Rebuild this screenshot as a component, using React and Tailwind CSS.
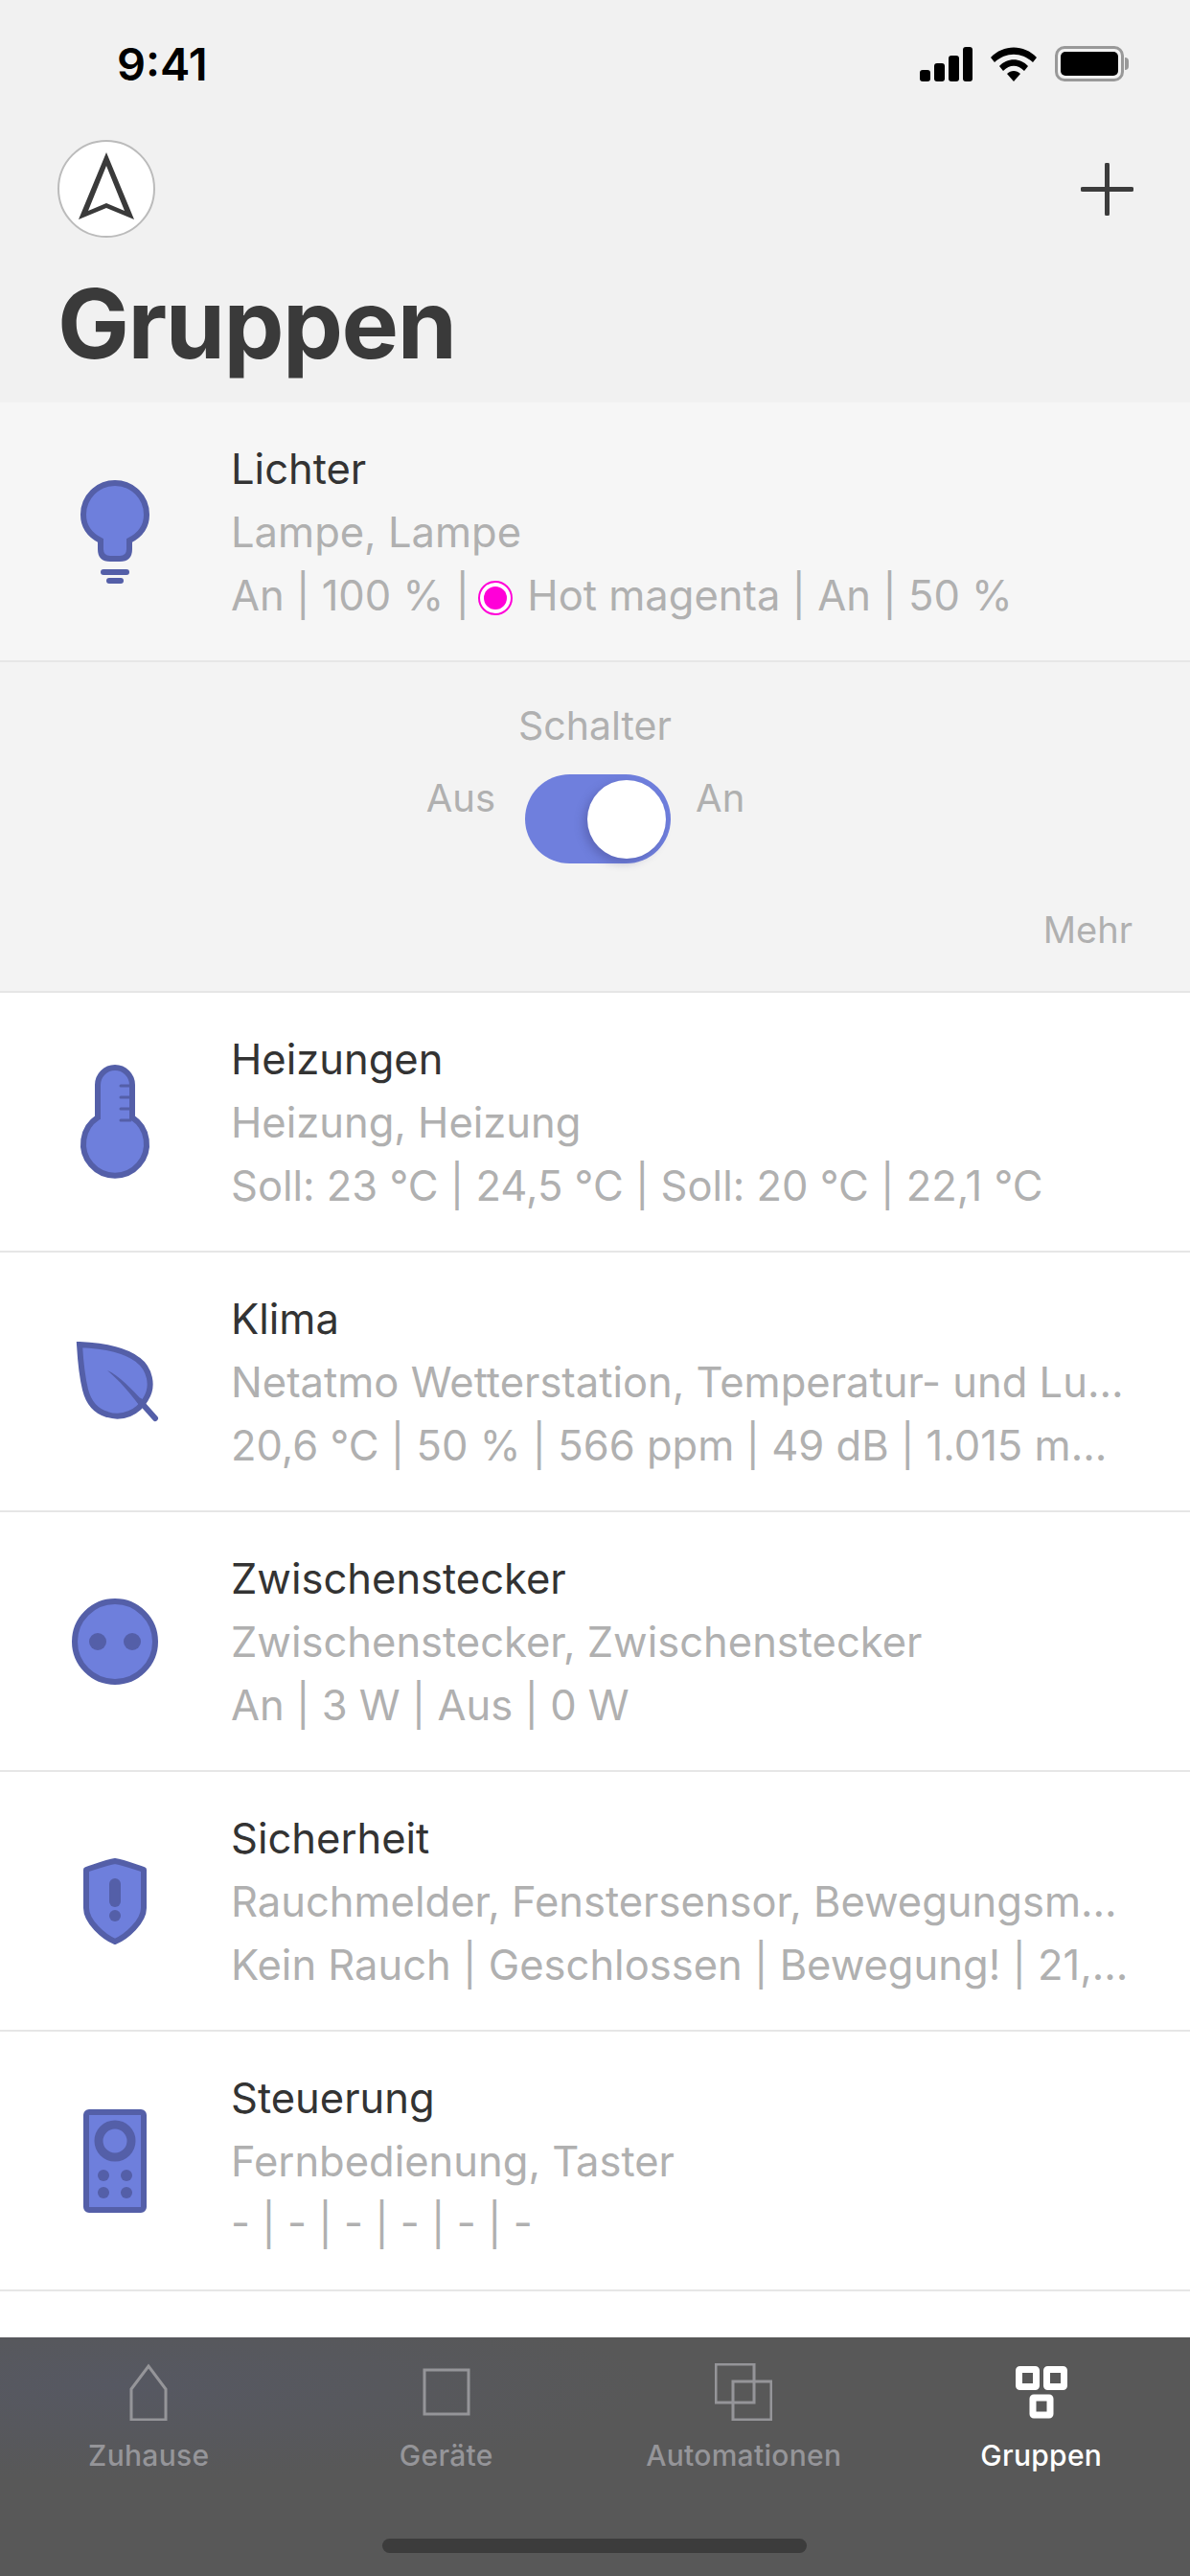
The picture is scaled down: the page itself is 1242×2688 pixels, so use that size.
import React from 'react';

const FILL = '#6e7fdc';
const EDGE = '#545fa8';

// list icons are all drawn in a 120 wide box, stroke 6 like the reference
const LampIcon = () => (
  <svg width="120" height="108" viewBox="0 0 120 108">
    <path d="M45 72 V63 C31 56 27 46 27 36 A33 33 0 0 1 93 36 C93 46 89 56 75 63 V72 Q75 82 65 82 H55 Q45 82 45 72 Z" fill={FILL} stroke={EDGE} strokeWidth="6" />
    <rect x="45" y="93" width="30" height="6" rx="3" fill={EDGE} />
    <rect x="51" y="102" width="18" height="6" rx="3" fill={EDGE} />
  </svg>
);

const ThermoIcon = () => (
  <svg width="120" height="120" viewBox="0 0 120 120">
    <path d="M42 55 V21 A18 18 0 0 1 78 21 V55 A33 33 0 1 1 42 55 Z" fill={FILL} stroke={EDGE} strokeWidth="6" />
    <path d="M66 22 H76 M66 34 H76 M66 46 H76 M66 58 H76" stroke={EDGE} strokeWidth="3" strokeLinecap="round" />
  </svg>
);

const LeafIcon = () => (
  <svg width="120" height="84" viewBox="0 0 120 84">
    <path d="M23 3 C45 4 70 8 84 19 C96 28 101 46 92 60 C84 74 68 81 52 76 C38 72 32 62 29 50 C26 38 24 20 23 3 Z" fill={FILL} stroke={EDGE} strokeWidth="6" />
    <path d="M52 30 C64 35 78 50 90 63 L85 66 C76 54 64 40 52 30 Z" fill={EDGE} />
    <path d="M86 62 L102 80" stroke={EDGE} strokeWidth="6" strokeLinecap="round" />
  </svg>
);

const SocketIcon = () => (
  <svg width="120" height="90" viewBox="0 0 120 90">
    <circle cx="60" cy="45" r="42" fill={FILL} stroke={EDGE} strokeWidth="6" />
    <circle cx="42" cy="45" r="9" fill={EDGE} />
    <circle cx="78" cy="45" r="9" fill={EDGE} />
  </svg>
);

const ShieldIcon = () => (
  <svg width="120" height="90" viewBox="0 0 120 90">
    <path d="M30 12 C42 8 52 4 60 3 C68 4 78 8 90 12 V52 C90 66 72 82 60 87 C48 82 30 66 30 52 Z" fill={FILL} stroke={EDGE} strokeWidth="6" strokeLinejoin="round" />
    <rect x="54" y="21" width="12" height="30" rx="6" fill={EDGE} />
    <circle cx="60" cy="60" r="6" fill={EDGE} />
  </svg>
);

const RemoteIcon = () => (
  <svg width="120" height="108" viewBox="0 0 120 108">
    <rect x="30" y="3" width="60" height="102" rx="3" fill={FILL} stroke={EDGE} strokeWidth="6" />
    <circle cx="60" cy="33" r="17" fill="none" stroke={EDGE} strokeWidth="9" />
    <circle cx="48" cy="69" r="6" fill={EDGE} />
    <circle cx="72" cy="69" r="6" fill={EDGE} />
    <circle cx="48" cy="87" r="6" fill={EDGE} />
    <circle cx="72" cy="87" r="6" fill={EDGE} />
  </svg>
);

const groups = [
  { name: 'Heizungen', devices: 'Heizung, Heizung', state: 'Soll: 23 °C | 24,5 °C | Soll: 20 °C | 22,1 °C', icon: <ThermoIcon /> },
  { name: 'Klima', devices: 'Netatmo Wetterstation, Temperatur- und Lu…', state: '20,6 °C | 50 % | 566 ppm | 49 dB | 1.015 m…', icon: <LeafIcon /> },
  { name: 'Zwischenstecker', devices: 'Zwischenstecker, Zwischenstecker', state: 'An | 3 W | Aus | 0 W', icon: <SocketIcon /> },
  { name: 'Sicherheit', devices: 'Rauchmelder, Fenstersensor, Bewegungsm…', state: 'Kein Rauch | Geschlossen | Bewegung! | 21,…', icon: <ShieldIcon /> },
  { name: 'Steuerung', devices: 'Fernbedienung, Taster', state: '- | - | - | - | - | -', icon: <RemoteIcon /> },
];

const GroupRow = ({ name, devices, state, icon, className = 'bg-white' }) => (
  <div className={`flex items-center h-[271px] pl-[60px] pr-[40px] border-b-2 border-[#e6e6e6] ${className}`}>
    <div className="w-[120px] shrink-0 flex justify-center">{icon}</div>
    <div className="ml-[61px] min-w-0 flex-1 text-[43.5px] leading-[66px] text-[#b0b0b0] whitespace-nowrap">
      <div className="text-[#333333]">{name}</div>
      <div>{devices}</div>
      <div>{state}</div>
    </div>
  </div>
);

const tabs = [
  {
    label: 'Zuhause',
    icon: <path d="M2 26 L20 2 L38 26 V58 H2 Z" transform="translate(10 1)" />,
  },
  { label: 'Geräte', icon: <rect x="7" y="7" width="46" height="46" /> },
  {
    label: 'Automationen',
    icon: (
      <>
        <rect x="1" y="1" width="40" height="40" />
        <rect x="19" y="19" width="40" height="40" />
      </>
    ),
  },
];

export default function App() {
  return (
    <div className="h-[2688px] flex flex-col overflow-hidden bg-white font-['Inter',sans-serif]">
      <header className="bg-[#f1f1f1] h-[420px] shrink-0">
        {/* status bar */}
        <div className="flex items-center justify-between h-[134px] pl-[122px] pr-[64px] pb-[1px]">
          <span className="text-[47px] leading-none font-semibold text-black">9:41</span>
          <div className="flex items-center">
            <svg width="56" height="36" viewBox="0 0 56 36">
              <rect x="0" y="24" width="11" height="12" rx="3" />
              <rect x="15" y="17" width="11" height="19" rx="3" />
              <rect x="30" y="9" width="11" height="27" rx="3" />
              <rect x="45" y="0" width="10" height="36" rx="3" />
            </svg>
            <svg className="ml-[18px]" width="48" height="36" viewBox="0 0 48 36">
              <path d="M0 11 C13 -3 35 -3 48 11 L44 16 C32 5 16 5 4 16 Z" />
              <path d="M9 20 C17 11 31 11 39 20 L35 25 C28 18 20 18 13 25 Z" />
              <path d="M17 28 C21 24 27 24 31 28 L24 36 Z" />
            </svg>
            <div className="ml-[19px] flex items-center">
              <div className="w-[72px] h-[37px] rounded-[10px] border-[3px] border-[#999999] p-[3px]">
                <div className="h-full rounded-[5px] bg-black" />
              </div>
              <div className="w-[4px] h-[13px] rounded-r-full bg-[#999999] ml-[1px]" />
            </div>
          </div>
        </div>
        {/* nav row */}
        <div className="flex items-center justify-between pl-[60px] pr-[59px] mt-[12px]">
          <div className="w-[102px] h-[102px] rounded-full bg-white border-2 border-[#bbbbbb] flex items-center justify-center">
            <svg width="66" height="78" viewBox="0 0 66 78">
              <path fillRule="evenodd" fill="#3a3a3a" d="M33 1 L62 71 L33 59 L4 71 Z M33 15 L14 62 L33 54 L52 62 Z" />
            </svg>
          </div>
          <svg width="55" height="55" viewBox="0 0 55 55">
            <path d="M27.5 2 V53 M2 27.5 H53" stroke="#3c3c3c" strokeWidth="5" strokeLinecap="round" />
          </svg>
        </div>
        <h1 className="pl-[60px] mt-[35px] text-[100px] leading-[110px] font-bold tracking-[-1.5px] text-[#3a3a3a]">Gruppen</h1>
      </header>

      <main className="flex-1 min-h-0 overflow-hidden">
        <GroupRow
          name="Lichter"
          devices="Lampe, Lampe"
          icon={<LampIcon />}
          className="bg-[#f6f6f6]"
          state={
            <>
              An | 100 % |{' '}
              <span className="inline-flex align-[1px] items-center justify-center w-[36px] h-[36px] rounded-full bg-white border-2 border-[#ff00d8] ml-[-3px] mr-[3px]">
                <span className="w-[24px] h-[24px] rounded-full bg-[#ff00d8]" />
              </span>{' '}
              Hot magenta | An | 50 %
            </>
          }
        />
        {/* expanded controls of the light group */}
        <section className="h-[345px] bg-[#f3f3f3] border-b-2 border-[#e6e6e6] text-[41px] text-[#b0b0b0] flex flex-col">
          <div className="mt-[34px] h-[64px] leading-[64px] text-center">Schalter</div>
          <div className="mt-[19px] flex justify-center items-start pr-[20px]">
            <span className="leading-[50px] text-[40px]">Aus</span>
            <div className="ml-[31px] w-[152px] h-[93px] rounded-full bg-[#6f7fdd] flex items-center justify-end pr-[5px]">
              <div className="w-[82px] h-[82px] rounded-full bg-white shadow-[-4px_4px_10px_rgba(60,60,120,0.35)]" />
            </div>
            <span className="ml-[26px] leading-[50px] text-[40px]">An</span>
          </div>
          <div className="mt-[37px] pr-[60px] text-right leading-[64px] text-[38px]">Mehr</div>
        </section>
        {groups.map((g) => (
          <GroupRow key={g.name} {...g} />
        ))}
      </main>

      {/* tab bar */}
      <nav className="relative h-[249px] shrink-0 bg-[#585858] bg-[radial-gradient(ellipse_at_10%_20%,#565862_0%,#585858_35%)]">
        <div className="grid grid-cols-4 pt-[27px]">
          {tabs.map((t) => (
            <div key={t.label} className="flex flex-col items-center text-[#959599]">
              <svg width="60" height="60" viewBox="0 0 60 60" fill="none" stroke="currentColor" strokeWidth="3">
                {t.icon}
              </svg>
              <span className="mt-[18px] text-[30px] leading-[36px] tracking-[0.3px] font-medium">{t.label}</span>
            </div>
          ))}
          <div className="flex flex-col items-center text-white">
            <svg width="60" height="60" viewBox="0 0 60 60" fill="none" stroke="currentColor" strokeWidth="7">
              <rect x="6.5" y="6.5" width="18" height="18" rx="1" />
              <rect x="35.5" y="6.5" width="18" height="18" rx="1" />
              <rect x="21" y="36" width="18" height="18" rx="1" />
            </svg>
            <span className="mt-[18px] text-[30px] leading-[36px] tracking-[0.3px] font-medium">Gruppen</span>
          </div>
        </div>
        <div className="absolute left-[399px] bottom-[24px] w-[443px] h-[15px] rounded-full bg-[#3c3c3c]" />
      </nav>
    </div>
  );
}
